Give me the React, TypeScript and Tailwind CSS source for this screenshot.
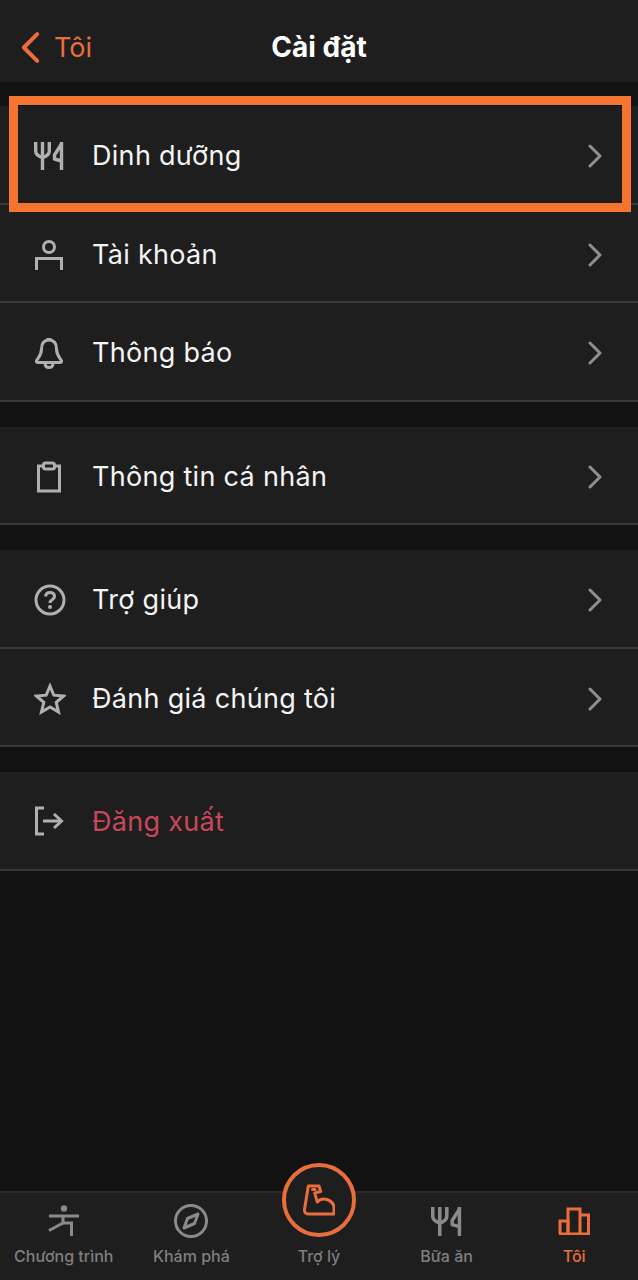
import React from "react";

const FONT = "[font-family:Inter,'Noto_Sans',sans-serif]";

function Fork({ className }: { className: string }) {
  return (
    <svg viewBox="0 0 30 30" fill="none" stroke="currentColor" strokeWidth="3.4" className={className}>
      <path d="M1.7 1V10Q1.7 14.5 8.5 16.5Q15.3 14.5 15.3 10V1" />
      <path d="M8.5 1V29" />
      <path d="M27.5 1V29" />
      <path d="M27.5 3L20.5 14V18L27.5 20" strokeLinejoin="round" />
    </svg>
  );
}

const Chevron = () => (
  <svg viewBox="0 0 16 24" className="w-[16px] h-[24px]" fill="none" stroke="#8f8f8f" strokeWidth="3" strokeLinecap="round" strokeLinejoin="round">
    <path d="M3 2 L13 12 L3 22" />
  </svg>
);

const Person = () => (
  <svg viewBox="0 0 30 32" className="w-[30px] h-[32px]" fill="none" stroke="#b0b0b0" strokeWidth="3">
    <circle cx="15" cy="8" r="5.5" />
    <path d="M2.5 31V19.5H27.5V31" />
  </svg>
);

const Bell = () => (
  <svg viewBox="0 0 30 32" className="w-[30px] h-[32px]" fill="none" stroke="#b0b0b0" strokeWidth="3" strokeLinejoin="round">
    <path d="M15 3C9 3 7.5 7 7.5 12C7.5 18 5 20 2.5 23.5Q2 25.5 4 25.5H26Q28 25.5 27.5 23.5C25 20 22.5 18 22.5 12C22.5 7 21 3 15 3Z" />
    <path d="M11 26Q11 30.5 15 30.5Q19 30.5 19 26" />
    <path d="M12.5 2.5H17.5" />
  </svg>
);

const Clip = () => (
  <svg viewBox="0 0 30 32" className="w-[30px] h-[32px]" fill="none" stroke="#b0b0b0" strokeWidth="3">
    <path d="M9 5H4.5V30H25.5V5H21" />
    <rect x="9.5" y="2" width="11" height="6" rx="2" />
  </svg>
);

const Help = () => (
  <svg viewBox="0 0 32 32" className="w-[32px] h-[32px]" fill="none" stroke="#b0b0b0" strokeWidth="3">
    <circle cx="16" cy="16" r="14" />
    <path d="M11.5 12.5Q12 8.5 16 8.5Q20.5 8.5 20.5 12.5C20.5 15.5 16 15.5 16 19" />
    <circle cx="16" cy="23" r="2" fill="#b0b0b0" stroke="none" />
  </svg>
);

const Star = () => (
  <svg viewBox="0 0 32 32" className="w-[32px] h-[32px]" fill="none" stroke="#b0b0b0" strokeWidth="3" strokeLinejoin="miter">
    <path d="M16 3L19.8 12.2L29.7 13L22.2 19.4L24.5 29L16 23.9L7.5 29L9.8 19.4L2.3 13L12.2 12.2Z" />
  </svg>
);

const Logout = () => (
  <svg viewBox="0 0 30 30" className="w-[30px] h-[30px] -mt-[2px]" fill="none" stroke="#b0b0b0" strokeWidth="3">
    <path d="M10 2H2.5V28H10" />
    <path d="M9 15H27" />
    <path d="M20 8L27.5 15L20 22" />
  </svg>
);

const Yoga = () => (
  <svg viewBox="0 0 32 32" className="w-[32px] h-[32px]" fill="none" stroke="#8a8a8a" strokeWidth="3">
    <circle cx="16" cy="3.5" r="3.2" fill="#8a8a8a" stroke="none" />
    <path d="M1 11H31" />
    <path d="M15 11V18H23.5V31" />
    <path d="M15 18L1 25.5" />
  </svg>
);

const Compass = () => (
  <svg viewBox="0 0 36 36" className="w-[36px] h-[36px]" fill="none" stroke="#8a8a8a" strokeWidth="3">
    <circle cx="18" cy="18" r="15.5" />
    <path d="M25 11L21.5 20.5L11 25L14.5 15.5Z" strokeLinejoin="round" />
  </svg>
);

const Bars = () => (
  <svg viewBox="0 0 32 28" className="w-[32px] h-[28px]" fill="none" stroke="#e96e3c" strokeWidth="3">
    <path d="M2 27V14H10V27" />
    <path d="M10 27V2H22V27" />
    <path d="M22 8H30.5V27H1" />
  </svg>
);

const Arm = () => (
  <svg viewBox="0 0 32 32" className="w-[32px] h-[32px]" fill="none" stroke="#e96e3c" strokeWidth="3" strokeLinejoin="round" strokeLinecap="round">
    <path d="M5.3 2H16L17.7 7.5L11.7 9L14.3 18C17 15 20 14.5 24 15.5C28 17 31 20 31 24V30H5C2.5 30 1.2 28 1.5 25.5Z" />
    <path d="M9.5 5.5H12" />
  </svg>
);

function Row({ icon, label, red, chevron = true }: { icon: React.ReactNode; label: string; red?: boolean; chevron?: boolean }) {
  return (
    <div className="flex items-center h-[98.5px] pt-[4px] bg-[#1e1e1e] border-b-2 border-[#3a3a3a] pl-[34px] pr-[35px]">
      <div className="w-[58px] flex items-center">{icon}</div>
      <span className={`flex-1 text-[27px] tracking-[0.3px] ${red ? "text-[#c8475a]" : "text-[#f4f4f4]"}`}>{label}</span>
      {chevron && <Chevron />}
    </div>
  );
}

function Tab({ icon, label, active }: { icon: React.ReactNode; label: string; active?: boolean }) {
  return (
    <div className="flex-1 flex flex-col items-center">
      <div className="h-[36px] flex items-center justify-center">{icon}</div>
      <span className={`mt-[7px] text-[16px] leading-[20px] font-medium whitespace-nowrap ${active ? "text-[#e96e3c]" : "text-[#7f7f7f]"}`}>{label}</span>
    </div>
  );
}

export default function App() {
  return (
    <div className={`relative w-[638px] h-[1280px] bg-[#121212] flex flex-col overflow-hidden ${FONT}`}>
      <header className="relative h-[82px] shrink-0 bg-[#1e1e1e] flex items-center justify-center pt-[12px]">
        <div className="absolute left-[20px] top-[31px] flex items-center gap-[13px]">
          <svg viewBox="0 0 22 34" className="w-[21px] h-[33px]" fill="none" stroke="#e96e3c" strokeWidth="4.2" strokeLinecap="round" strokeLinejoin="round">
            <path d="M18 3L4 17L18 31" />
          </svg>
          <span className="text-[27px] leading-[33px] text-[#e96e3c]">Tôi</span>
        </div>
        <h1 className="text-[28px] font-bold text-white">Cài đặt</h1>
      </header>

      <section className="mt-[24px]">
        <Row icon={<Fork className="w-[30px] h-[30px] text-[#b0b0b0]" />} label="Dinh dưỡng" />
        <Row icon={<Person />} label="Tài khoản" />
        <Row icon={<Bell />} label="Thông báo" />
      </section>

      <section className="mt-[25px]">
        <Row icon={<Clip />} label="Thông tin cá nhân" />
      </section>

      <section className="mt-[25px]">
        <Row icon={<Help />} label="Trợ giúp" />
        <Row icon={<Star />} label="Đánh giá chúng tôi" />
      </section>

      <section className="mt-[25px]">
        <Row icon={<Logout />} label="Đăng xuất" red chevron={false} />
      </section>

      <div className="absolute left-[9px] top-[96px] w-[622px] h-[116px] border-[9px] border-[#f47530]" />

      <nav className="absolute left-0 bottom-0 w-full h-[89px] bg-[#1e1e1e] border-t-2 border-[#2a2a2a] flex pt-[10px]">
        <Tab icon={<Yoga />} label="Chương trình" />
        <Tab icon={<Compass />} label="Khám phá" />
        <Tab icon={<div className="w-[32px] h-[32px]" />} label="Trợ lý" />
        <Tab icon={<Fork className="w-[31px] h-[31px] text-[#8a8a8a]" />} label="Bữa ăn" />
        <Tab icon={<Bars />} label="Tôi" active />
      </nav>
      <div className="absolute left-[282px] top-[1163px] w-[74px] h-[74px] rounded-full border-[4px] border-[#e96e3c] bg-[#1e1e1e] flex items-center justify-center">
        <Arm />
      </div>
    </div>
  );
}
